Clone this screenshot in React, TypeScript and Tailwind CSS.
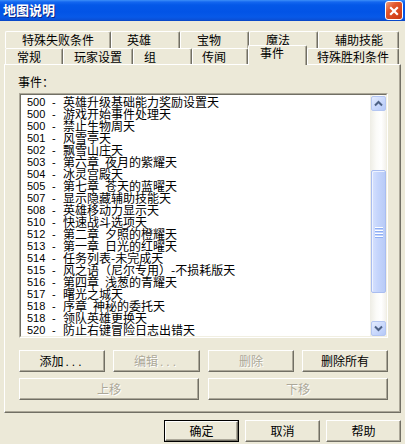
import React from "react";

const CJK = "font-['Noto_Sans_CJK_SC','Noto_Sans_CJK_JP',sans-serif]";
const LAT = "font-['Liberation_Sans',Arial,sans-serif]";

const row1 = [
  { label: "特殊失败条件", w: "w-[106px]", pl: "pl-[16px]" },
  { label: "英雄", w: "w-[69px]", pl: "pl-[15px]" },
  { label: "宝物", w: "w-[69px]", pl: "pl-[16px]" },
  { label: "魔法", w: "w-[69px]", pl: "pl-[16px]" },
  { label: "辅助技能", w: "w-[81px]", pl: "pl-[16px]" },
];

const row2 = [
  { label: "常规", w: "w-[58px]", pl: "pl-[11px]", sel: false },
  { label: "玩家设置", w: "w-[70px]", pl: "pl-[10px]", sel: false },
  { label: "组", w: "w-[59px]", pl: "pl-[10px]", sel: false },
  { label: "传闻", w: "w-[56px]", pl: "pl-[9px]", sel: false },
  { label: "事件", w: "w-[59px]", pl: "pl-[11px]", sel: true },
  { label: "特殊胜利条件", w: "w-[92px]", pl: "pl-[9px]", sel: false },
];

const items: [string, string][] = [
  ["500", "英雄升级基础能力奖励设置天"],
  ["500", "游戏开始事件处理天"],
  ["500", "禁止生物周天"],
  ["501", "风雪亭天"],
  ["502", "飘雪山庄天"],
  ["503", "第六章\u2002夜月的紫耀天"],
  ["504", "冰灵宫殿天"],
  ["505", "第七章\u2002苍天的蓝曜天"],
  ["507", "显示隐藏辅助技能天"],
  ["508", "英雄移动力显示天"],
  ["510", "快速战斗选项天"],
  ["512", "第二章\u2002夕照的橙耀天"],
  ["513", "第一章\u2002日光的红曜天"],
  ["514", "任务列表-未完成天"],
  ["515", "风之语（尼尔专用）-不损耗版天"],
  ["516", "第四章\u2002浅葱的青耀天"],
  ["517", "曙光之城天"],
  ["518", "序章\u2002神秘的委托天"],
  ["518", "领队英雄更换天"],
  ["520", "防止右键冒险日志出错天"],
  ["521", "城镇建筑设置天"],
];

const bevel =
  "border border-t-white border-l-white border-r-[#716F64] border-b-[#716F64] shadow-[inset_-1px_-1px_#ACA899]";

function Label({ text, dots, disabled }: { text: string; dots?: boolean; disabled?: boolean }) {
  return (
    <span
      className={`leading-[12px] ${disabled ? "text-[#ACA899] [text-shadow:1px_1px_#ffffff]" : "text-black"}`}
    >
      {text}
      {dots && <span className={`${LAT} tracking-[3px] pl-[2px]`}>...</span>}
    </span>
  );
}

function Btn({
  text,
  w,
  dots,
  disabled,
  def,
}: {
  text: string;
  w: string;
  dots?: boolean;
  disabled?: boolean;
  def?: boolean;
}) {
  if (def) {
    return (
      <div className={`${w} h-[22px] border border-black bg-[#ECE9D8]`}>
        <div className={`h-full w-full ${bevel} flex items-center justify-center`}>
          <Label text={text} dots={dots} disabled={disabled} />
        </div>
      </div>
    );
  }
  return (
    <div className={`${w} h-[22px] bg-[#ECE9D8] ${bevel} flex items-center justify-center`}>
      <Label text={text} dots={dots} disabled={disabled} />
    </div>
  );
}

function Arrow({ up }: { up: boolean }) {
  return (
    <svg width="9" height="7" viewBox="0 0 9 7">
      <path
        d={up ? "M1 5.5 L4.5 2 L8 5.5" : "M1 1.5 L4.5 5 L8 1.5"}
        stroke="#4D6185"
        strokeWidth="2"
        fill="none"
      />
    </svg>
  );
}

function ScrollBtn({ up }: { up: boolean }) {
  return (
    <div className="ml-[1px] w-[15px] h-[15px] rounded-[2px] border border-[#B4C6F2] bg-[linear-gradient(135deg,#E4ECFE_0%,#C9D8FC_55%,#B5C9F7_100%)] flex items-center justify-center">
      <Arrow up={up} />
    </div>
  );
}

export default function App() {
  return (
    <div className={`w-[405px] h-[444px] bg-[#ECE9D8] overflow-hidden ${CJK} text-[12px] text-black`}>
      {/* title bar */}
      <div className="h-[21px] flex items-start justify-between pl-[3px] pr-[2px] bg-[linear-gradient(to_bottom,#3D8FF8_0px,#1467F0_2px,#0458E8_5px,#0254E6_12px,#0759E8_17px,#0A4FD6_20px,#0842BB_21px)]">
        <div className="pt-[2px] text-[13px] leading-[15px] font-bold text-white [text-shadow:1px_1px_#0A2585]">
          地图说明
        </div>
        <div className="mt-[1px] w-[18px] h-[19px] rounded-[3px] border border-white bg-[linear-gradient(135deg,#F0A080_0%,#E2562B_35%,#D4421A_75%,#C23A14_100%)] flex items-center justify-center">
          <svg width="10" height="10" viewBox="0 0 10 10">
            <path d="M1.2 1.2 L8.8 8.8 M8.8 1.2 L1.2 8.8" stroke="white" strokeWidth="2.2" />
          </svg>
        </div>
      </div>

      {/* tabs */}
      <div className="pt-[10px] pl-[5px]">
        <div className="flex h-[17px]">
          {row1.map((t) => (
            <div
              key={t.label}
              className={`${t.w} ${t.pl} h-[17px] bg-[#ECE9D8] border-t border-l border-r border-t-white border-l-white border-r-[#716F64] shadow-[inset_-1px_0_#ACA899] rounded-t-[2px] pt-[1px] leading-[14px] whitespace-nowrap`}
            >
              {t.label}
            </div>
          ))}
        </div>
        <div className="flex h-[16px] items-start">
          {row2.map((t) =>
            t.sel ? (
              <div
                key={t.label}
                className={`${t.w} ${t.pl} relative z-10 -top-[3px] h-[20px] bg-[#ECE9D8] border-t border-l border-r border-t-white border-l-white border-r-[#716F64] shadow-[inset_-1px_0_#ACA899] rounded-t-[2px] pt-[1px] leading-[12px] whitespace-nowrap`}
              >
                {t.label}
              </div>
            ) : (
              <div
                key={t.label}
                className={`${t.w} ${t.pl} h-[16px] bg-[#ECE9D8] border-t border-l border-r border-t-white border-l-white border-r-[#716F64] shadow-[inset_-1px_0_#ACA899] rounded-t-[2px] pt-[1px] leading-[14px] whitespace-nowrap`}
              >
                {t.label}
              </div>
            )
          )}
        </div>
      </div>

      {/* panel */}
      <div className="ml-[4px] w-[397px] h-[349px] border border-t-white border-l-white border-r-[#716F64] border-b-[#716F64] shadow-[inset_-1px_-1px_#ACA899] flex flex-col">
        <div className="mt-[11px] ml-[13px] h-[12px] leading-[12px]">事件：</div>

        {/* list box */}
        <div className="mt-[5px] ml-[14px] w-[369px] h-[245px] border border-t-[#ACA899] border-l-[#ACA899] border-r-white border-b-white">
          <div className="w-full h-full border border-t-[#716F64] border-l-[#716F64] border-r-[#F1EFE2] border-b-[#F1EFE2] bg-white flex">
            <div className="flex-1 overflow-hidden pt-[1px] pl-[6px]">
              {items.map(([n, t], i) => (
                <div key={i} className="flex h-[12px] items-start whitespace-nowrap">
                  <span className={`${LAT} text-[11px] leading-[12px] w-[24px]`}>{n}</span>
                  <span className={`${LAT} text-[11px] leading-[12px] w-[12px] pl-[1px]`}>-</span>
                  <span className="leading-[12px]">{t}</span>
                </div>
              ))}
            </div>
            {/* scrollbar */}
            <div className="w-[16px] h-full pt-[1px] flex flex-col bg-[linear-gradient(to_right,#EEEDE5_0%,#FBFBF8_40%,#FFFFFF_70%,#F3F1EC_100%)]">
              <ScrollBtn up />
              <div className="flex-1 flex flex-col">
                <div className="h-[59px]" />
                <div className="ml-[1px] w-[15px] h-[123px] rounded-[2px] border border-[#A9BDF0] bg-[linear-gradient(to_right,#D6E1FD_0%,#C5D5FC_45%,#B8CBF7_100%)] shadow-[inset_1px_1px_#EEF3FF] flex flex-col items-center justify-center gap-[1px]">
                  <div className="w-[8px] h-[1px] bg-white shadow-[0_1px_#8DAEF5]" />
                  <div className="w-[8px] h-[1px] bg-white shadow-[0_1px_#8DAEF5] mt-[1px]" />
                  <div className="w-[8px] h-[1px] bg-white shadow-[0_1px_#8DAEF5] mt-[1px]" />
                  <div className="w-[8px] h-[1px] bg-white shadow-[0_1px_#8DAEF5] mt-[1px]" />
                </div>
                <div className="flex-1" />
              </div>
              <ScrollBtn up={false} />
            </div>
          </div>
        </div>

        {/* buttons */}
        <div className="mt-[12px] ml-[14px] flex gap-[8px]">
          <Btn text="添加" dots w="w-[86px]" />
          <Btn text="编辑" dots disabled w="w-[87px]" />
          <Btn text="删除" disabled w="w-[86px]" />
          <Btn text="删除所有" w="w-[86px]" />
        </div>
        <div className="mt-[6px] ml-[14px] flex gap-[9px]">
          <Btn text="上移" disabled w="w-[180px]" />
          <Btn text="下移" disabled w="w-[180px]" />
        </div>
      </div>

      {/* bottom buttons */}
      <div className="mt-[7px] pr-[4px] flex justify-end gap-[6px]">
        <Btn text="确定" def w="w-[75px]" />
        <Btn text="取消" w="w-[75px]" />
        <Btn text="帮助" w="w-[75px]" />
      </div>
    </div>
  );
}
